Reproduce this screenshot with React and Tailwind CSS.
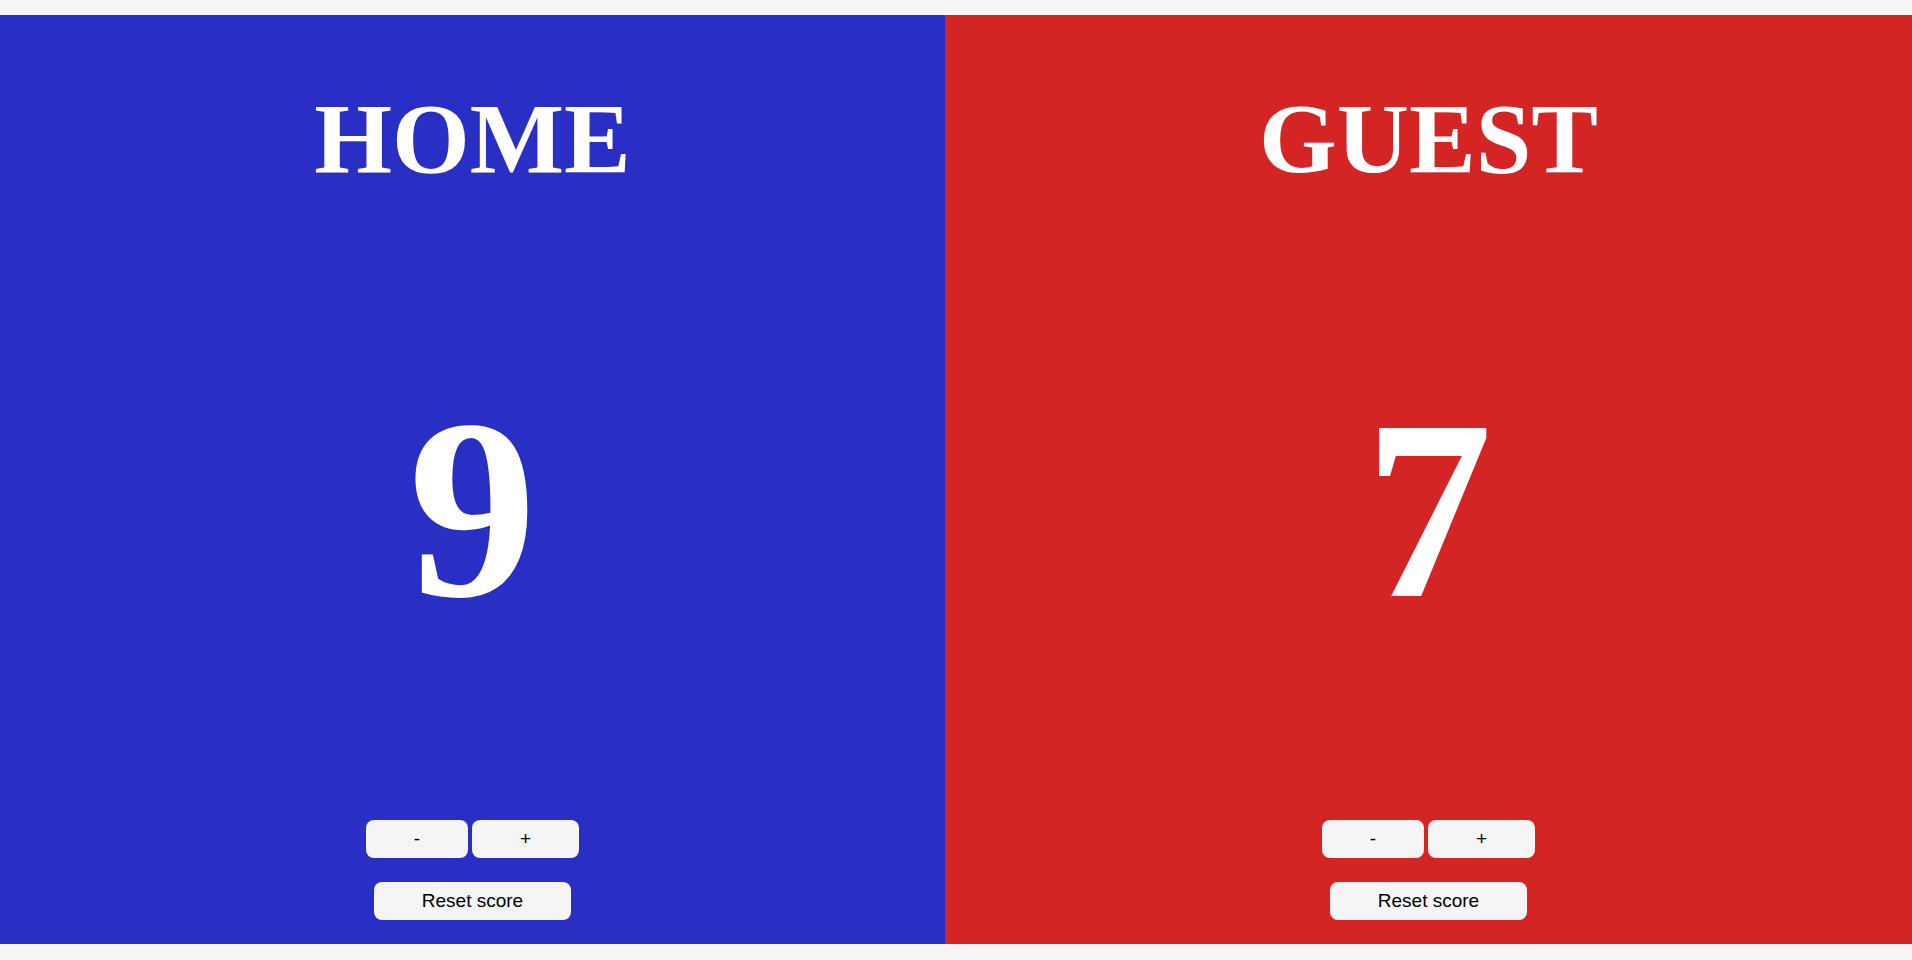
import { useState } from "react";

const buttonStyle =
  "rounded-lg bg-[#f5f5f5] px-12 py-2 text-[19px] leading-[22px] text-black";

function Team({ name, initial, color }) {
  const [score, setScore] = useState(initial);
  return (
    <section className={`flex flex-col items-center text-white ${color}`}>
      <h2 className="mt-16 font-['Liberation_Serif',serif] text-[100px] leading-[120px] font-bold">
        {name}
      </h2>
      <p
        aria-live="polite"
        className="flex flex-1 items-center font-['Liberation_Serif',serif] text-[256px] leading-[294px] font-bold"
      >
        {score}
      </p>
      <div className="mb-6 flex flex-col items-center gap-6">
        <div className="flex gap-1">
          <button
            type="button"
            aria-label={`Subtract a point from ${name}`}
            className={buttonStyle}
            onClick={() => setScore(Math.max(0, score - 1))}
          >
            -
          </button>
          <button
            type="button"
            aria-label={`Add a point to ${name}`}
            className={buttonStyle}
            onClick={() => setScore(score + 1)}
          >
            +
          </button>
        </div>
        <button type="button" className={buttonStyle} onClick={() => setScore(0)}>
          Reset score
        </button>
      </div>
    </section>
  );
}

export default function App() {
  return (
    <main className="flex min-h-screen flex-col bg-[#f5f5f5] pt-[15px] pb-4 font-['Liberation_Sans',sans-serif]">
      <div className="grid flex-1 grid-cols-[945fr_967fr]">
        <Team name="HOME" initial={9} color="bg-[#292ec4]" />
        <Team name="GUEST" initial={7} color="bg-[#d42424]" />
      </div>
    </main>
  );
}
